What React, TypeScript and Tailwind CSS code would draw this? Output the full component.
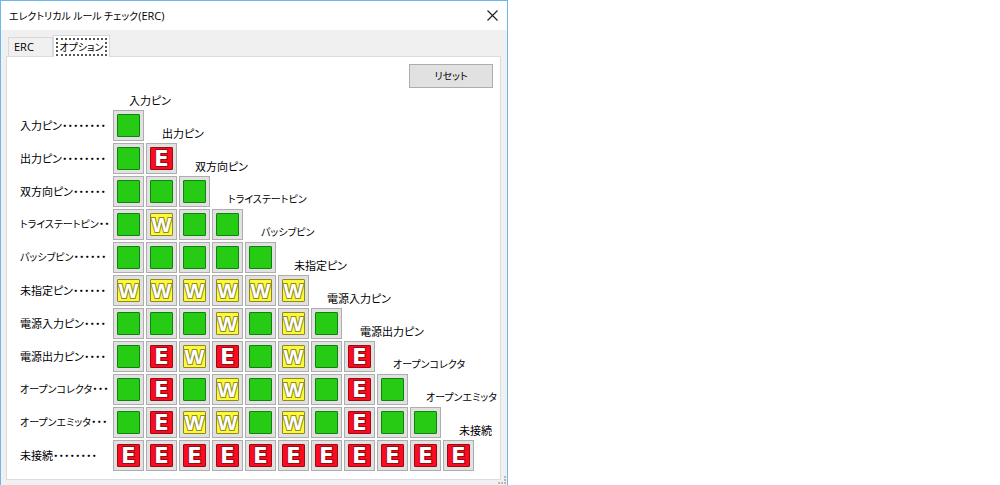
type Level = "ok" | "W" | "E";

const pins: { name: string; dots: number; cells: string; kana?: boolean }[] = [
  { name: "入力ピン", dots: 8, cells: "." },
  { name: "出力ピン", dots: 8, cells: ".E" },
  { name: "双方向ピン", dots: 6, cells: "..." },
  { name: "トライステートピン", dots: 2, cells: ".W..", kana: true },
  { name: "パッシブピン", dots: 6, cells: ".....", kana: true },
  { name: "未指定ピン", dots: 6, cells: "WWWWWW" },
  { name: "電源入力ピン", dots: 4, cells: "...W.W." },
  { name: "電源出力ピン", dots: 4, cells: ".EWE.W.E" },
  { name: "オープンコレクタ", dots: 3, cells: ".E.W.W.E.", kana: true },
  { name: "オープンエミッタ", dots: 3, cells: ".EWW.W.E..", kana: true },
  { name: "未接続", dots: 8, cells: "EEEEEEEEEEE" },
];

const fills: Record<Level, { fill: string; edge: string }> = {
  ok: { fill: "#26cc14", edge: "#128010" },
  W: { fill: "#fdf83a", edge: "#8c8a20" },
  E: { fill: "#fb0a20", edge: "#980a14" },
};

function Tile({ level }: { level: Level }) {
  const { fill, edge } = fills[level];
  return (
    <svg width="23" height="23" viewBox="0 0 23 23" aria-hidden="true">
      <rect x="0.5" y="0.5" width="22" height="22" rx="0.5" fill={fill} stroke={edge} />
      {level !== "ok" && (
        <text
          x="11.5"
          y="19"
          textAnchor="middle"
          fontFamily={level === "E" ? "'DejaVu Sans', sans-serif" : "'Liberation Sans', sans-serif"}
          fontSize="21"
          fontWeight="bold"
          fill="#fff"
          stroke={edge}
          strokeWidth="2"
          paintOrder="stroke"
        >
          {level}
        </text>
      )}
    </svg>
  );
}

function Cell({ code, label }: { code: string; label: string }) {
  const level: Level = code === "E" ? "E" : code === "W" ? "W" : "ok";
  return (
    <button
      type="button"
      aria-label={label}
      className="flex size-[31px] shrink-0 items-center justify-center border border-[#adadad] bg-[#e1e1e1]"
    >
      <Tile level={level} />
    </button>
  );
}

function PinName({ name, kana }: { name: string; kana?: boolean }) {
  return <span className={kana ? "text-[10px]" : "text-[11px]"}>{name}</span>;
}

export default function App() {
  return (
    <div className="min-h-screen bg-white [font-family:'Noto_Sans_CJK_JP',sans-serif] text-[11px] leading-[14px] text-black [font-feature-settings:'palt']">
      <main className="flex w-full max-w-[508px] flex-col border-x border-t border-[#6cb8ea] bg-[#f0f0f0]">
        <header className="flex h-[29px] items-center justify-between bg-white pr-2 pl-2">
          <h1 className="text-[10px]">
            エレクトリカル ルール チェック<span className="text-[11px] [font-family:'Open_Sans',sans-serif]">(ERC)</span>
          </h1>
          <button type="button" aria-label="閉じる" className="flex size-[13px] items-center justify-center">
            <svg width="11" height="11" viewBox="0 0 11 11" aria-hidden="true">
              <path d="M0.5 0.5 10.5 10.5M10.5 0.5 0.5 10.5" stroke="#222" strokeWidth="1.2" />
            </svg>
          </button>
        </header>

        <div className="pt-[5px] pr-[6px] pl-[5px]">
          <div role="tablist" className="flex items-end pl-0.5">
            <button
              type="button"
              role="tab"
              aria-selected="false"
              className="h-[19px] w-[45px] border border-b-0 border-[#d9d9d9] bg-[#f0f0f0] pl-[5px] text-left text-[11px] [font-family:'Open_Sans',sans-serif]"
            >
              ERC
            </button>
            <button
              type="button"
              role="tab"
              aria-selected="true"
              className="z-10 -mb-px h-[22px] w-[57px] border border-b-0 border-[#d9d9d9] bg-white px-0.5 pt-0.5 pb-px text-[10px]"
            >
              <span className="flex h-full items-center justify-center border-2 border-dotted border-[#555]">
                オプション
              </span>
            </button>
          </div>

          <section role="tabpanel" className="border border-[#dcdcdc] bg-white px-[7px] pt-[7px] pb-2">
            <div className="flex justify-end">
              <button type="button" className="h-6 w-[84px] border border-[#adadad] bg-[#e1e1e1] text-[10px]">
                リセット
              </button>
            </div>

            <div className="flex flex-col gap-0.5 pt-[5px] pl-[6px]">
              <div className="pb-px pl-[109px]">
                <PinName name={pins[0].name} />
              </div>
              {pins.map((pin, row) => (
                <div key={pin.name} className="flex items-end">
                  <div className="w-[93px] shrink-0 self-center pb-0.5 whitespace-nowrap">
                    <PinName name={pin.name} kana={pin.kana} />
                    {"・".repeat(pin.dots)}
                  </div>
                  <div className="flex gap-0.5">
                    {pin.cells.split("").map((code, col) => (
                      <Cell key={col} code={code} label={`${pin.name} - ${pins[col].name}`} />
                    ))}
                  </div>
                  {row + 1 < pins.length && (
                    <div className="pb-px pl-[18px] whitespace-nowrap">
                      <PinName name={pins[row + 1].name} kana={pins[row + 1].kana} />
                    </div>
                  )}
                </div>
              ))}
            </div>
          </section>
        </div>

        <div className="flex h-[5px] items-end justify-end">
          <svg width="10" height="10" viewBox="0 0 10 10" className="shrink-0" aria-hidden="true">
            <path d="M7 1h2v2h-2zM7 4h2v2h-2zM7 7h2v2h-2zM4 7h2v2h-2zM1 7h2v2h-2z" fill="#b8b8b8" />
          </svg>
        </div>
      </main>
    </div>
  );
}
